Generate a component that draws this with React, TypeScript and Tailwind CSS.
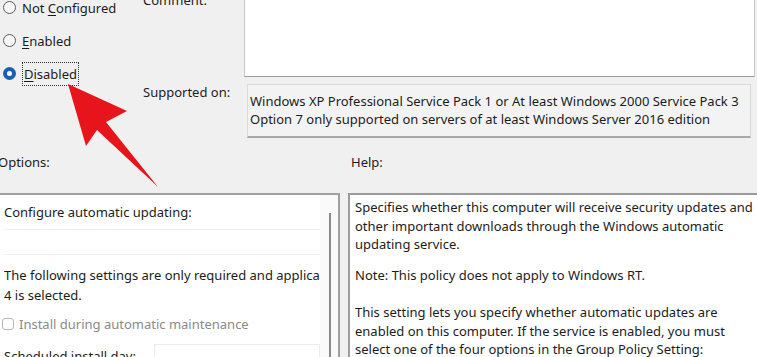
import React from 'react'

const Radio = ({ checked }: { checked?: boolean }) =>
  checked ? (
    <span className="flex h-[13px] w-[13px] items-center justify-center rounded-full bg-[#1a5fb4]">
      <span className="h-[5px] w-[5px] rounded-full bg-white" />
    </span>
  ) : (
    <span className="h-[13px] w-[13px] rounded-full border border-[#5a5a5a] bg-[#f7f7f7]" />
  )

const RadioRow = ({
  pre,
  mnemonic,
  post,
  checked,
}: {
  pre: string
  mnemonic: string
  post: string
  checked?: boolean
}) => (
  <div className="flex h-[33px] items-center gap-[6px]">
    <Radio checked={checked} />
    <span
      className={
        checked
          ? 'border border-dotted border-[#333] px-[1px] py-[2px] leading-[18px]'
          : 'leading-[18px]'
      }
    >
      {pre}
      <span className="underline underline-offset-2">{mnemonic}</span>
      {post}
    </span>
  </div>
)

const Arrow = () => (
  <svg
    className="pointer-events-none absolute left-0 top-0"
    width="200"
    height="200"
    viewBox="0 0 200 200"
  >
    <polygon
      points="68,84 127,111 106,122 158,187 97,130 86,146"
      fill="#e8141b"
    />
  </svg>
)

const App = () => {
  return (
    <div className="relative h-[357px] w-[757px] overflow-hidden bg-[#f0f0f0] font-['Noto_Sans',sans-serif] text-[13px] text-[#1c1c1c]">
      {/* top: state radios, comment, supported on */}
      <div className="flex h-[138px]">
        <div className="-mt-[9px] w-[143px] pl-[3px]">
          <RadioRow pre="Not " mnemonic="C" post="onfigured" />
          <RadioRow pre="" mnemonic="E" post="nabled" />
          <RadioRow pre="" mnemonic="D" post="isabled" checked />
        </div>
        <div className="flex w-[101px] flex-col">
          <div className="-mt-[9px] leading-[18px]">Comment:</div>
          <div className="mt-[74px] leading-[18px]">Supported on:</div>
        </div>
        <div className="flex w-[513px] flex-col">
          <div className="mr-[2px] h-[77px] border-x border-b border-[#c8c8c8] border-b-[#9a9a9a] bg-white" />
          <div className="ml-[3px] mr-[6px] mt-[7px] flex h-[54px] flex-col justify-center border-l border-r border-t border-[#dadada] border-b-2 border-b-[#a8a8a8] bg-[#f3f3f3] pl-[2px] leading-[17.5px]">
            <div>Windows XP Professional Service Pack 1 or At least Windows 2000 Service Pack 3</div>
            <div>Option 7 only supported on servers of at least Windows Server 2016 edition</div>
          </div>
        </div>
      </div>

      {/* labels */}
      <div className="mt-[15px] flex h-[18px] leading-[18px]">
        <div className="w-[353px] -ml-[2px]">Options:</div>
        <div>Help:</div>
      </div>

      {/* panels */}
      <div className="mt-[22px] flex gap-[8px]">
        <div className="flex h-[200px] w-[340px] border-r-2 border-t-2 border-[#a0a0a0] bg-white">
          <div className="w-[320px] pl-[4px] leading-[18px]">
            <div className="flex h-[35px] items-center border-b border-[#f0f0f0]">
              Configure automatic updating:
            </div>
            <div className="h-[25px] border-b border-[#f0f0f0]" />
            <div className="mt-[11px] whitespace-nowrap overflow-hidden">
              The following settings are only required and applicable if
            </div>
            <div className="mt-[2px]">4 is selected.</div>
            <div className="mt-[11px] flex items-center gap-[5px] text-[#8a8a8a]">
              <span className="h-[12px] w-[12px] -ml-[2px] rounded-[3px] border border-[#b5b5b5] bg-white" />
              <span>Install during automatic maintenance</span>
            </div>
            <div className="mt-[11px] flex">
              <span className="w-[150px] pt-[3px]">Scheduled install day:</span>
              <span className="h-[30px] flex-1 border border-[#ececec]" />
            </div>
          </div>
          <div className="flex flex-1 justify-center bg-[#fafafa] pt-[18px]">
            <div className="ml-[2px] w-[2px] bg-[#8a8a8a]" />
          </div>
        </div>
        <div className="h-[200px] flex-1 border-l-2 border-t-2 border-[#9a9a9a] bg-white pl-[5px] pt-[3px] leading-[18.5px]">
          <p>
            Specifies whether this computer will receive security updates and other important
            downloads through the Windows automatic updating service.
          </p>
          <p className="mt-[12px]">Note: This policy does not apply to Windows RT.</p>
          <p className="mt-[19px]">
            This setting lets you specify whether automatic updates are enabled on this computer.
            If the service is enabled, you must select one of the four options in the Group
            Policy Setting:
          </p>
        </div>
      </div>

      <Arrow />
    </div>
  )
}

export default App
